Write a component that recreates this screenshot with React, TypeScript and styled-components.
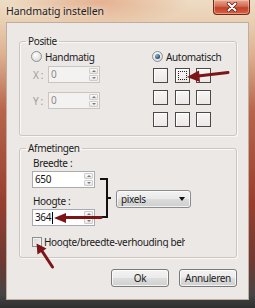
import React from "react";
import styled, { createGlobalStyle } from "styled-components";

const Global = createGlobalStyle`
  html, body { margin: 0; padding: 0; background: #fff; }
  body { font-family: "Noto Sans", "DejaVu Sans", sans-serif; }
`;

const Window = styled.div`
  position: relative;
  width: 255px;
  height: 308px;
  box-sizing: border-box;
  padding: 0 6px 8px 6px;
  display: flex;
  flex-direction: column;
  overflow: hidden;
  font-family: "Noto Sans", "DejaVu Sans", sans-serif;
  font-size: 10px;
  letter-spacing: -0.35px;
  color: #1b1b1b;
  background:
    radial-gradient(ellipse 90px 24px at 100px 2px, rgba(224, 150, 112, 0.6), rgba(224, 150, 112, 0) 100%),
    linear-gradient(180deg, #eddcc4 0px, #e9cfb2 22px, #ddb090 55px, #b8654c 110px, #993f2f 200px, #6d3a33 262px, #474444 294px, #2f2f2f 308px);
`;

const TitleBar = styled.div`
  height: 22px;
  display: flex;
  align-items: flex-start;
  justify-content: space-between;
`;

const Title = styled.div`
  margin-top: 4px;
  line-height: 14px;
  font-size: 10.5px;
  letter-spacing: -0.1px;
  color: #1e1e1e;
  text-shadow: 0 0 6px rgba(255, 255, 255, 0.9);
`;

const CloseButton = styled.div`
  width: 37px;
  height: 15px;
  margin-right: -1px;
  box-sizing: border-box;
  border: 1px solid #6e2a1e;
  border-top: none;
  border-radius: 0 0 4px 4px;
  background: linear-gradient(180deg, #e7a996 0%, #d26a50 45%, #c1422a 55%, #d9623f 100%);
  display: flex;
  align-items: center;
  justify-content: center;
  box-shadow: inset 0 0 0 1px rgba(255, 220, 200, 0.45);
`;

const Client = styled.div`
  flex: 1;
  position: relative;
  background: #ece8e6;
  border: 1px solid #bfae9f;
  display: flex;
  flex-direction: column;
  padding: 0 11px 0 12px;
`;

const Group = styled.fieldset<{ $mt: number }>`
  margin: ${(p) => p.$mt}px 0 0 0;
  padding: 0;
  border: 1px solid #cdc6c1;
  border-radius: 3px;
  box-shadow: inset 1px 1px 0 #faf8f7, 1px 1px 0 #faf8f7;
  min-width: 0;
`;

const Legend = styled.legend`
  margin-left: 6px;
  padding: 0 2px;
  line-height: 14px;
  font-size: 10px;
  color: #1b1b1b;
`;

const PosBody = styled.div`
  display: grid;
  grid-template-columns: 121px auto;
  padding: 2px 0 8px 11px;
`;

const Column = styled.div`
  display: flex;
  flex-direction: column;
`;

const RadioRow = styled.div`
  height: 13px;
  display: flex;
  align-items: center;
  gap: 3px;
  font-size: 10px;
`;

const Radio = styled.span<{ $checked?: boolean }>`
  width: 11px;
  height: 11px;
  box-sizing: border-box;
  border-radius: 50%;
  border: 1px solid #8f8f8f;
  background: radial-gradient(circle at 40% 35%, #ffffff 0%, #e4e2e2 60%, #cfcdcd 100%);
  display: flex;
  align-items: center;
  justify-content: center;
  &::after {
    content: "";
    display: ${(p) => (p.$checked ? "block" : "none")};
    width: 5px;
    height: 5px;
    border-radius: 50%;
    background: radial-gradient(circle at 35% 35%, #8fb8d8 0%, #2a5a84 60%, #1b3a5a 100%);
  }
`;

const FieldRow = styled.div<{ $mt: number }>`
  display: flex;
  align-items: center;
  margin-top: ${(p) => p.$mt}px;
`;

const FieldLabel = styled.span`
  width: 17px;
  padding-left: 2px;
  box-sizing: border-box;
  color: #a09c9a;
  font-size: 10px;
`;

const TextBox = styled.div<{ $w: number; $disabled?: boolean }>`
  width: ${(p) => p.$w}px;
  height: 17px;
  box-sizing: border-box;
  border: 1px solid ${(p) => (p.$disabled ? "#c9c5c3" : "#a9abb2")};
  background: ${(p) => (p.$disabled ? "#f4f2f1" : "#ffffff")};
  display: flex;
  align-items: stretch;
  padding: 1px 1px 1px 2px;
  color: ${(p) => (p.$disabled ? "#8d8a88" : "#111")};
`;

const BoxText = styled.span`
  flex: 1;
  display: flex;
  align-items: center;
  line-height: 13px;
  font-size: 10px;
`;

const Caret = styled.span`
  display: inline-block;
  width: 1px;
  height: 12px;
  background: #000;
  margin-left: 1px;
`;

const Spinner = styled.div`
  width: 9px;
  display: flex;
  flex-direction: column;
  gap: 1px;
`;

const SpinBtn = styled.div<{ $down?: boolean }>`
  flex: 1;
  box-sizing: border-box;
  border: 1px solid #cfcccb;
  border-radius: 1px;
  background: linear-gradient(180deg, #fbfbfb, #e8e6e5);
  display: flex;
  align-items: center;
  justify-content: center;
  &::after {
    content: "";
    width: 0;
    height: 0;
    border-left: 2px solid transparent;
    border-right: 2px solid transparent;
    ${(p) => (p.$down ? "border-top: 2px solid #7a7a7a;" : "border-bottom: 2px solid #7a7a7a;")}
  }
`;

const BoxGrid = styled.div`
  margin-top: 5px;
  margin-left: 1px;
  display: grid;
  grid-template-columns: repeat(3, 15px);
  grid-auto-rows: 15px;
  gap: 7px 6.5px;
`;

const Cell = styled.div<{ $focus?: boolean }>`
  box-sizing: border-box;
  border: 1px solid #4b4847;
  background: linear-gradient(180deg, #f8f6f5, #ebe8e6);
  box-shadow: inset 1px 1px 0 #ffffff;
  padding: 2px;
  &::after {
    content: "";
    display: ${(p) => (p.$focus ? "block" : "none")};
    width: 100%;
    height: 100%;
    box-sizing: border-box;
    border: 1px dotted #222;
  }
`;

const DimBody = styled.div`
  display: flex;
  flex-direction: column;
  padding: 2px 0 9px 12px;
`;

const DimRow = styled.div`
  display: flex;
  align-items: flex-start;
`;

const InputsCol = styled.div`
  width: 63px;
  display: flex;
  flex-direction: column;
`;

const DimLabel = styled.div<{ $mt: number }>`
  margin-top: ${(p) => p.$mt}px;
  margin-bottom: 1px;
  margin-left: 1px;
  line-height: 13px;
  font-size: 10px;
`;

const Bracket = styled.div`
  position: relative;
  margin-left: 5px;
  margin-top: 21px;
  width: 8px;
  height: 40px;
  box-sizing: border-box;
  border: 2px solid #111;
  border-left: none;
  &::after {
    content: "";
    position: absolute;
    right: -5px;
    top: 17px;
    width: 3px;
    height: 2px;
    background: #111;
  }
`;

const Select = styled.div`
  margin-left: 8px;
  margin-top: 33px;
  width: 75px;
  height: 18px;
  box-sizing: border-box;
  border: 1px solid #8c8c8c;
  border-radius: 3px;
  background: linear-gradient(180deg, #f4f3f3 0%, #eae9e9 48%, #dcdbdb 52%, #d0cfcf 100%);
  box-shadow: inset 0 0 0 1px rgba(255, 255, 255, 0.7);
  display: flex;
  align-items: center;
  justify-content: space-between;
  padding: 0 5px 0 4px;
  font-size: 10px;
  &::after {
    content: "";
    width: 0;
    height: 0;
    border-left: 3.5px solid transparent;
    border-right: 3.5px solid transparent;
    border-top: 4px solid #111;
  }
`;

const CheckRow = styled.div`
  margin-top: 9px;
  width: 153px;
  height: 13px;
  overflow: hidden;
  white-space: nowrap;
  display: flex;
  align-items: center;
  gap: 2px;
  font-size: 10px;
`;

const Checkbox = styled.span`
  flex: none;
  width: 10px;
  height: 10px;
  box-sizing: border-box;
  border: 1px solid #8f8f8f;
  background: linear-gradient(135deg, #d8d6d5, #f6f5f5);
  box-shadow: inset 0 0 0 1px #f2f1f1;
`;

const ButtonRow = styled.div`
  margin-top: 11px;
  display: flex;
  justify-content: flex-end;
  gap: 10px;
`;

const Button = styled.div`
  width: 58px;
  height: 18px;
  box-sizing: border-box;
  border: 1px solid #7a7a7a;
  border-radius: 3px;
  background: linear-gradient(180deg, #f3f3f3 0%, #ebebeb 48%, #dddddd 52%, #cfcfcf 100%);
  box-shadow: inset 0 0 0 1px rgba(255, 255, 255, 0.75);
  display: flex;
  align-items: center;
  justify-content: center;
  font-size: 10px;
  color: #1b1b1b;
`;

const Overlay = styled.svg`
  position: absolute;
  left: 0;
  top: 0;
  width: 255px;
  height: 308px;
  pointer-events: none;
`;

const ARROW = "#7c1517";

export default function App() {
  return (
    <>
      <Global />
      <Window>
        <TitleBar>
          <Title>Handmatig instellen</Title>
          <CloseButton>
            <svg width="12" height="10" viewBox="0 0 12 10">
              <path d="M2.5 1.5 L9.5 8.5 M9.5 1.5 L2.5 8.5" stroke="#5a2016" strokeWidth="3.4" strokeLinecap="round" />
              <path d="M2.5 1.5 L9.5 8.5 M9.5 1.5 L2.5 8.5" stroke="#ffffff" strokeWidth="2" strokeLinecap="round" />
            </svg>
          </CloseButton>
        </TitleBar>
        <Client>
          <Group $mt={11}>
            <Legend>Positie</Legend>
            <PosBody>
              <Column>
                <RadioRow>
                  <Radio />
                  <span>Handmatig</span>
                </RadioRow>
                <FieldRow $mt={3}>
                  <FieldLabel>X :</FieldLabel>
                  <TextBox $w={52} $disabled>
                    <BoxText>0</BoxText>
                    <Spinner>
                      <SpinBtn />
                      <SpinBtn $down />
                    </Spinner>
                  </TextBox>
                </FieldRow>
                <FieldRow $mt={9}>
                  <FieldLabel>Y :</FieldLabel>
                  <TextBox $w={52} $disabled>
                    <BoxText>0</BoxText>
                    <Spinner>
                      <SpinBtn />
                      <SpinBtn $down />
                    </Spinner>
                  </TextBox>
                </FieldRow>
              </Column>
              <Column>
                <RadioRow>
                  <Radio $checked />
                  <span>Automatisch</span>
                </RadioRow>
                <BoxGrid>
                  {Array.from({ length: 9 }).map((_, i) => (
                    <Cell key={i} $focus={i === 1} />
                  ))}
                </BoxGrid>
              </Column>
            </PosBody>
          </Group>
          <Group $mt={5}>
            <Legend>Afmetingen</Legend>
            <DimBody>
              <DimRow>
                <InputsCol>
                  <DimLabel $mt={0}>Breedte :</DimLabel>
                  <TextBox $w={63}>
                    <BoxText>650</BoxText>
                    <Spinner>
                      <SpinBtn />
                      <SpinBtn $down />
                    </Spinner>
                  </TextBox>
                  <DimLabel $mt={7}>Hoogte :</DimLabel>
                  <TextBox $w={63}>
                    <BoxText>
                      364
                      <Caret />
                    </BoxText>
                    <Spinner>
                      <SpinBtn />
                      <SpinBtn $down />
                    </Spinner>
                  </TextBox>
                </InputsCol>
                <Bracket />
                <Select>pixels</Select>
              </DimRow>
              <CheckRow>
                <Checkbox />
                <span>Hoogte/breedte-verhouding behouden</span>
              </CheckRow>
            </DimBody>
          </Group>
          <ButtonRow>
            <Button>Ok</Button>
            <Button>Annuleren</Button>
          </ButtonRow>
        </Client>
        <Overlay viewBox="0 0 255 308">
          <line x1="228" y1="72.5" x2="198" y2="76" stroke={ARROW} strokeWidth="3" strokeLinecap="round" />
          <polygon points="187,77 199,70.5 200,82" fill={ARROW} />
          <line x1="101" y1="217.5" x2="64" y2="217.5" stroke={ARROW} strokeWidth="3" strokeLinecap="round" />
          <polygon points="54,218 66,213 66,223" fill={ARROW} />
          <line x1="52.5" y1="267" x2="42" y2="251" stroke={ARROW} strokeWidth="3" strokeLinecap="round" />
          <polygon points="36.5,243.5 46.5,248.5 37.5,254.5" fill={ARROW} />
        </Overlay>
      </Window>
    </>
  );
}
